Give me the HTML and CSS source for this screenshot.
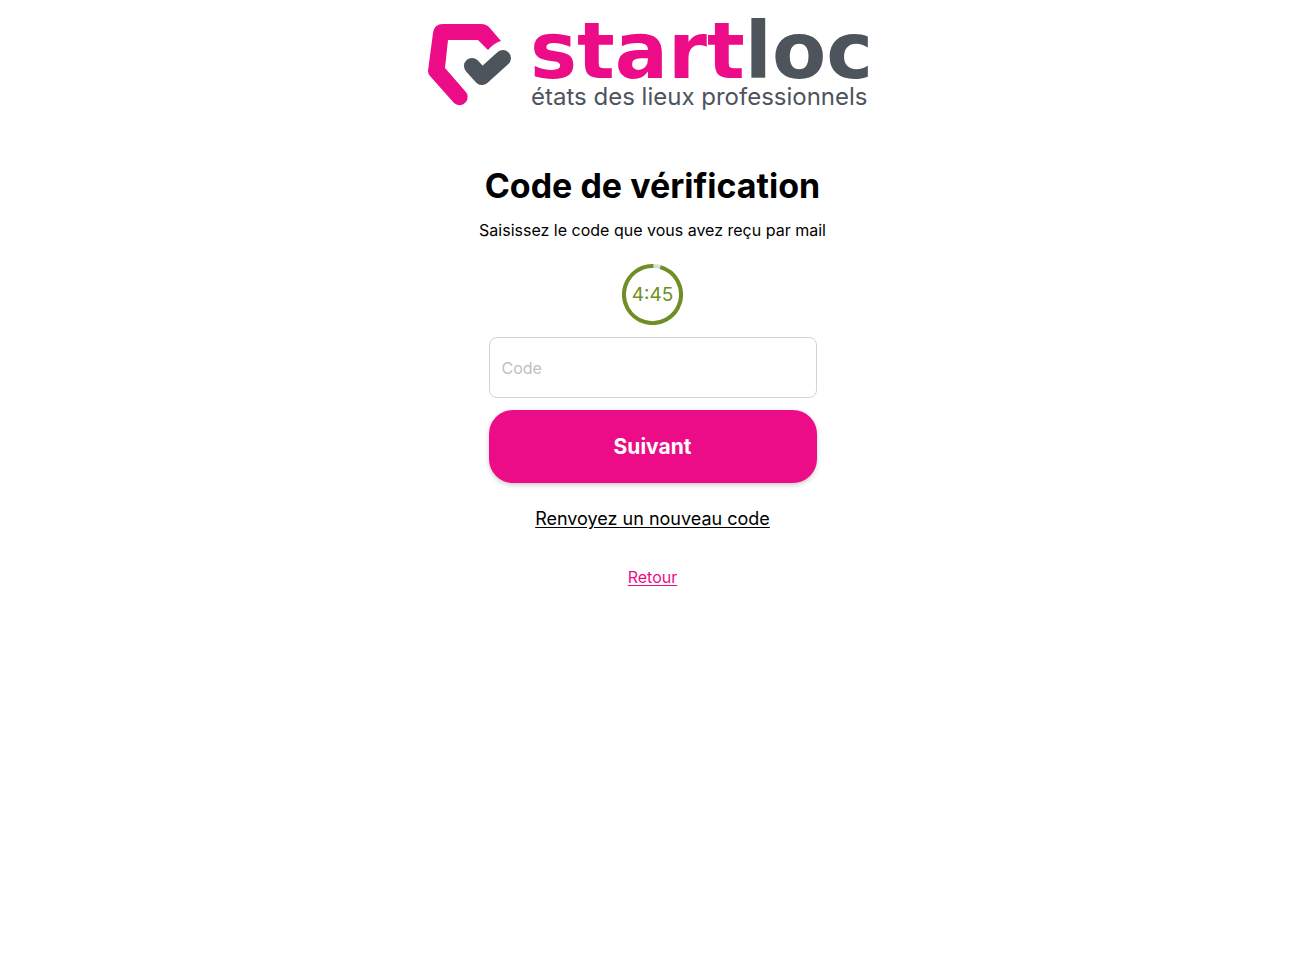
FILE: index.html
```html
<!doctype html>
<html lang="fr">

<head>
    <meta charset="UTF-8" />
    <meta name="viewport" content="width=device-width, initial-scale=1.0" />
    <title>Code de vérification</title>
    <link rel="stylesheet" href="styles.css">
</head>

<body>
    <main class="page">
        <svg class="logo" viewBox="0 0 450 88" role="img" aria-label="startloc">
            <path class="logo__house"
                d="M15 0H53Q58 0 61 3L73 17Q66 19 60 26L50 16H20L17 44L37 67A7.500 7.500 0 0 1 26 79L2 52Q0 50 0 47L5 9Q6 0 15 0Z" />
            <path class="logo__check" d="M44 42L54 53L75 34" />
            <text class="logo__name" x="102" y="54">start<tspan class="logo__name-end">loc</tspan></text>
            <text class="logo__tagline" x="103" y="81">états des lieux professionnels</text>
        </svg>
        <h1 class="title">Code de vérification</h1>
        <p class="subtitle">Saisissez le code que vous avez reçu par mail</p>
        <div class="timer" role="timer">
            <svg class="timer__ring" viewBox="0 0 62 62" aria-hidden="true">
                <circle class="timer__track" cx="31" cy="31" r="29" />
                <circle class="timer__progress" cx="31" cy="31" r="29" pathLength="300" />
            </svg>
            <span class="timer__label">4:45</span>
        </div>
        <form class="form">
            <input class="form__input" type="text" name="code" placeholder="Code" aria-label="Code"
                autocomplete="one-time-code">
            <button class="form__submit" type="submit">Suivant</button>
        </form>
        <a class="link" href="#">Renvoyez un nouveau code</a>
        <a class="link link--back" href="#">Retour</a>
    </main>
</body>

</html>
```
FILE: styles.css
```css
* {
    box-sizing: border-box;
    margin: 0;
    padding: 0;
}

body {
    background-color: #fff;
    color: #000;
    font-family: Inter, "Liberation Sans", sans-serif;
    font-size: 16px;
}

.page {
    display: flex;
    flex-direction: column;
    align-items: center;
    padding: 24px 12px;
}

.logo {
    width: 100%;
    max-width: 450px;
    overflow: visible;
}

.logo__house {
    fill: #ed0c87;
}

.logo__check {
    fill: none;
    stroke: #4d545c;
    stroke-width: 16px;
    stroke-linecap: round;
    stroke-linejoin: round;
}

.logo__name {
    fill: #ed0c87;
    font-family: "DejaVu Sans", sans-serif;
    font-size: 79px;
    font-weight: bold;
}

.logo__name-end {
    fill: #4d545c;
}

.logo__tagline {
    fill: #4d545c;
    font-size: 24px;
}

.title {
    font-size: 34px;
    font-weight: bold;
    line-height: 48px;
    margin-top: 50px;
    text-align: center;
}

.subtitle {
    line-height: 24px;
    margin-top: 8px;
    text-align: center;
}

.timer {
    display: grid;
    place-items: center;
    width: 61px;
    height: 61px;
    margin: 22px 0 12px;
    color: #6f8f22;
    font-size: 19px;
}

.timer__ring,
.timer__label {
    grid-area: 1 / 1;
}

.timer__ring {
    width: 100%;
    fill: none;
    stroke-width: 4px;
}

.timer__track {
    stroke: #d9d9d9;
}

.timer__progress {
    stroke: #6f8f22;
    stroke-dasharray: 288 12;
    transform: rotate(-74deg);
    transform-origin: center;
}

.form {
    display: grid;
    row-gap: 12px;
    width: 100%;
    max-width: 328px;
}

.form__input {
    width: 100%;
    height: 61px;
    padding: 0 12px;
    border: 1px solid #d3d3d3;
    border-radius: 8px;
    color: #000;
    font: inherit;
}

.form__input::placeholder {
    color: #c0c0c0;
}

.form__submit {
    padding: 20px;
    border: none;
    border-radius: 24px;
    background-color: #ed0c87;
    box-shadow: 0 2px 5px rgba(0, 0, 0, 0.2);
    color: #fff;
    cursor: pointer;
    font: inherit;
    font-size: 21px;
    font-weight: bold;
    line-height: 33px;
}

.link {
    margin-top: 24px;
    color: #000;
    font-size: 18px;
    line-height: 24px;
    text-underline-offset: 2px;
}

.link--back {
    margin-top: 34px;
    color: #ed0c87;
    font-size: 16px;
}
```
